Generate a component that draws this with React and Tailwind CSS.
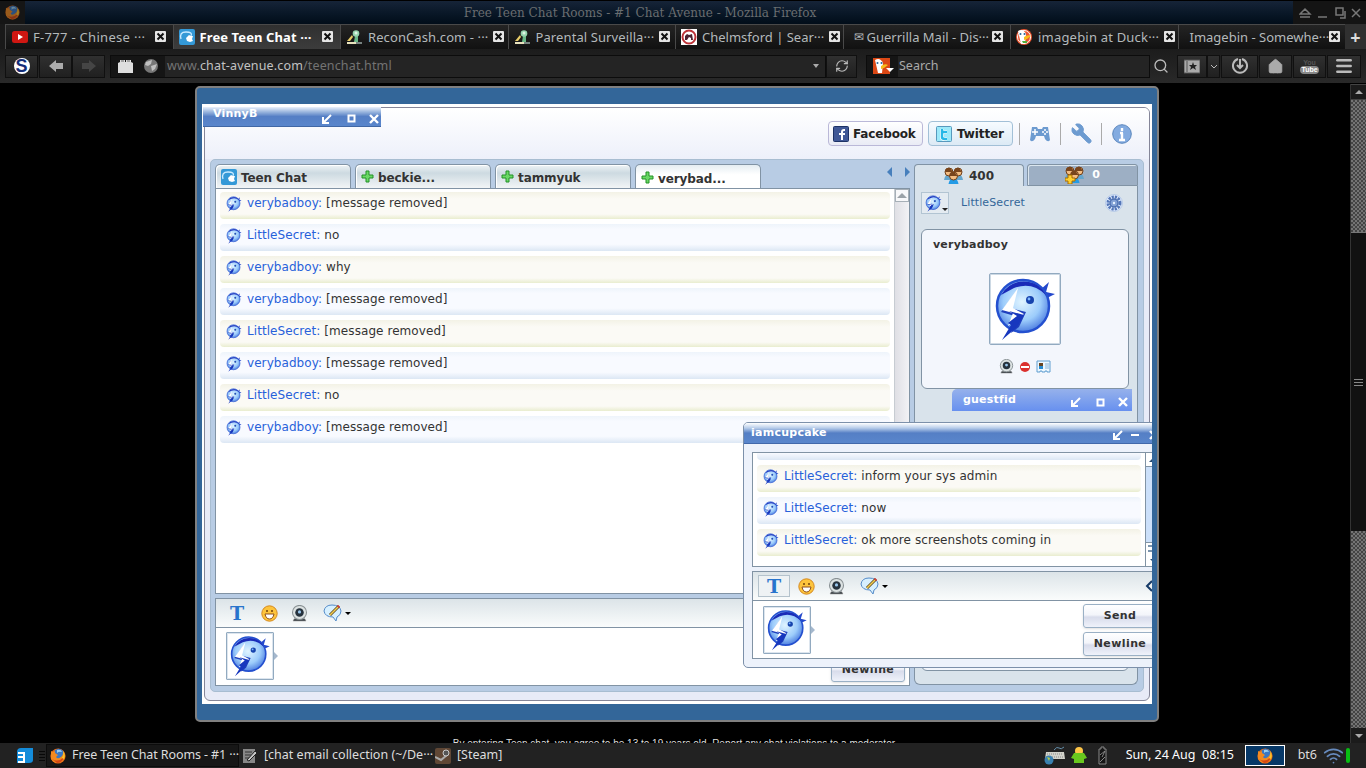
import React from "react";
import { Wrench, Gamepad2, RefreshCw, Search, Menu, Home, Wifi } from "lucide-react";

function Bird({ size, className = "" }) {
  return (
    <svg width={size} height={size} viewBox="0 0 64 64" className={"shrink-0 " + className}>
      <defs>
        <radialGradient id="birdFill" cx="0.48" cy="0.42" r="0.6">
          <stop offset="0" stopColor="#e0f4ff" />
          <stop offset="0.6" stopColor="#9cccfb" />
          <stop offset="1" stopColor="#4778de" />
        </radialGradient>
      </defs>
      <path d="M47 13 56 5 53 15 62 17 50 23Z" fill="#2448cc" />
      <circle cx="30" cy="29" r="26" fill="url(#birdFill)" stroke="#2450cf" strokeWidth="2.5" />
      <path d="M8 18Q18 2 36 5 47 7 53 18 39 4 21 11Z" fill="#1a2bb8" />
      <path d="M18 56 25 40 8 35 23 15 17 31 33 35 26 50Z" fill="#2040bd" />
      <path d="M25 11 9 33 20 36 15 49 31 37 20 31Z" fill="white" />
      <path d="M9 63 18 48 15 46 24 39 16 34 31 38 24 50Z" fill="#1737be" />
      <circle cx="37" cy="23" r="4" fill="#1643ad" />
      <circle cx="36" cy="22" r="1.4" fill="#7fb8ff" />
    </svg>
  );
}

function Firefox({ size = 16, className = "" }) {
  return (
    <svg width={size} height={size} viewBox="0 0 16 16" className={"shrink-0 " + className}>
      <circle cx="8" cy="8" r="7.6" fill="#e66a13" />
      <circle cx="8.7" cy="6" r="5.3" fill="#3b78c3" />
      <path d="M7 2q4-1 5 2-3-1-5 1Z" fill="#9bd1f2" />
      <path d="M1 3 3 4 5 3 5 5 8 7 6 9Q8 12 12 8L14 4Q16 11 11 14 5 17 1 11Z" fill="#f38a20" />
      <path d="M2 11Q8 15 14 9 12 15 7 15Z" fill="#d54714" />
      <path d="M13 3Q16 7 14 11L12 10Q14 7 13 3Z" fill="#fbc42b" />
    </svg>
  );
}

function Plus() {
  return (
    <svg width="13" height="13" viewBox="0 0 13 13" className="shrink-0">
      <path d="M5 1h3v4h4v3H8v4H5V8H1V5h4Z" fill="#69d865" stroke="#239126" />
    </svg>
  );
}

function Room({ size = 16 }) {
  return (
    <svg width={size} height={size} viewBox="0 0 16 16" className="shrink-0">
      <rect width="16" height="16" rx="2" fill="#3499d7" />
      <path d="M2 10Q0 3 7 3T12 7" fill="none" stroke="#c9eaff" strokeWidth="1.3" />
      <path d="M10 6 12 7 14 7 13 10 14 12 11 13 8 12 7 9Z" fill="white" />
    </svg>
  );
}

function Recon() {
  return (
    <svg width="17" height="15" viewBox="0 0 17 15" className="shrink-0">
      <path d="M9 6h3v6H8Z" fill="#68b887" />
      <circle cx="10" cy="3.5" r="3.3" fill="#94d3ac" />
      <circle cx="10" cy="3" r="1.5" fill="#e1f6e6" />
      <path d="M1 11 6 5 7 7 4 11Z" fill="#e8cd68" />
      <path d="M1 12h9v2H1Z" fill="#e8e2bd" />
      <path d="M10 12h6v2h-6Z" fill="#788381" />
    </svg>
  );
}

function Duck({ square }) {
  return (
    <svg width="17" height="16" viewBox="0 0 17 16" className="shrink-0">
      {square ? <rect width="17" height="16" fill="#dc4815" /> : <circle cx="8" cy="8" r="8" fill="#ed5530" />}
      {!square && <circle cx="8" cy="8" r="6.5" fill="none" stroke="white" />}
      <path d="M2 2Q7-1 10 5L9 15H5Z" fill="white" />
      <path d="M8 8Q12 5 15 7L11 10 8 11Z" fill="#f6bd19" />
      <circle cx="4.5" cy="5" r="1" fill="#22659b" />
      <circle cx="8.5" cy="5" r="1" fill="#22659b" />
      {!square && <path d="M6 12h5v2H7Z" fill="#52ae3b" />}
    </svg>
  );
}

function TabIcon({ kind }) {
  if (kind === "yt")
    return (
      <svg width="16" height="12" viewBox="0 0 16 12" className="shrink-0">
        <rect width="16" height="12" rx="2.5" fill="#cf1712" />
        <path d="M6 3v6l5-3Z" fill="white" />
      </svg>
    );
  if (kind === "room") return <Room />;
  if (kind === "recon") return <Recon />;
  if (kind === "duck") return <Duck />;
  if (kind === "mail") return <span className="text-[12px] leading-4">✉</span>;
  if (kind === "council")
    return (
      <svg width="16" height="16" viewBox="0 0 16 16" className="shrink-0">
        <rect width="16" height="16" fill="white" />
        <circle cx="8" cy="8" r="6.5" fill="white" stroke="#bd3338" strokeWidth="2" />
        <path d="M4 11V7L6 5 8 6 11 5 12 11H10V9L8 8 6 11Z" fill="#4d2230" />
      </svg>
    );
  return null;
}

const tabs = [
  ["yt", "F-777 - Chinese ···", "pl-[6px] gap-[5px]", "tracking-[0.3px]"],
  ["room", "Free Teen Chat ···", "pl-[5px] gap-[5px]", "tracking-[0.1px]"],
  ["recon", "ReconCash.com - ···", "pl-[5px] gap-[5px]", "tracking-[0.1px]"],
  ["recon", "Parental Surveilla···", "pl-[5px] gap-[5px]", "tracking-[0.1px]"],
  ["council", "Chelmsford | Sear···", "pl-[5px] gap-[5px]", "tracking-[0px]"],
  ["mail", "Guerrilla Mail - Dis···", "pl-[10px] gap-[3px]", "tracking-[0px]"],
  ["duck", "imagebin at Duck···", "pl-[5px] gap-[5px]", "tracking-[0.2px]"],
  ["none", "Imagebin - Somewhe···", "pl-[11px]", "tracking-[0px]"],
];

function BrowserTabs() {
  return (
    <div className="flex h-[25px] bg-[#191919] pl-[5px] font-['Noto_Sans',sans-serif] text-[13px]">
      {tabs.map(([icon, label, spacing, tracking], i) => (
        <div key={i} className={"flex w-[167.5px] shrink-0 items-center border-l border-t border-[#494949] pr-[7px] " + spacing + (i === 1 ? " bg-gradient-to-b from-[#303030] to-[#3c3c3c] font-bold text-white" : " bg-gradient-to-b from-[#242424] to-[#111] text-[#b4b9bb]")}>
          <TabIcon kind={icon} />
          <span className={"flex-1 whitespace-nowrap leading-4 " + tracking}>{label}</span>
          <svg width="11" height="11" viewBox="0 0 11 11" className="mb-0.5 shrink-0">
            <rect width="11" height="11" rx="1" fill="#e5e5e5" />
            <path d="M2.5 2.5 8.5 8.5M8.5 2.5 2.5 8.5" stroke="#111" strokeWidth="2" />
          </svg>
        </div>
      ))}
      <div className="flex flex-1 items-center justify-center bg-[#303030] text-[18px] font-bold leading-4 text-[#ddd]">+</div>
    </div>
  );
}

function ToolButton({ className = "", children }) {
  return <div className={"flex h-[23px] shrink-0 items-center justify-center border border-[#101010] bg-gradient-to-b from-[#303030] to-[#202020] text-[#bbb] " + className}>{children}</div>;
}

function NavArrow({ back, dim }) {
  return (
    <svg width="16" height="14" viewBox="0 0 16 14" className={back ? "" : "-scale-x-100"}>
      <path d="M1 7 8 1V4h7v6H8v3Z" fill={dim ? "#454545" : "#ababab"} />
    </svg>
  );
}

function NavBar() {
  return (
    <div className="flex h-[35px] items-center border-b border-black bg-gradient-to-b from-[#1c1c1c] to-[#292929] font-['Noto_Sans',sans-serif] text-[12.5px]">
      <ToolButton className="ml-[5px] w-[33px]">
        <span className="flex h-4 w-4 items-center justify-center rounded-full bg-white font-['Liberation_Sans'] text-[18px] font-bold leading-4 text-[#142d78]">S</span>
      </ToolButton>
      <ToolButton className="ml-[1px] w-[33px]"><NavArrow back /></ToolButton>
      <ToolButton className="w-[33px]"><NavArrow dim /></ToolButton>
      <div className="ml-[5px] flex h-[23px] w-[716px] items-center border border-[#0c0c0c] bg-[#242424]">
        <div className="flex h-full w-[54px] items-center gap-[11px] bg-[#151515] pl-[7px]">
          <svg width="15" height="14" viewBox="0 0 15 14">
            <path d="M0 4V14H15V4L13 3V1H8V3H7V1H2V3Z" fill="#dedede" />
            <path d="M3 2h3M9 2h3" stroke="#666" />
          </svg>
          <svg width="14" height="14" viewBox="0 0 14 14">
            <circle cx="7" cy="7" r="7" fill="#777" />
            <path d="M2 3 8 1 7 5 4 7 1 6ZM7 7 13 5 11 10 8 12Z" fill="#c0c0c0" />
          </svg>
        </div>
        <span className="ml-[2px] flex-1 tracking-[0.15px] text-[#737373]">www.<span className="text-[#c2c2c2]">chat-avenue.com</span>/teenchat.html</span>
        <span className="mr-[6px] h-0 w-0 border-x-[3px] border-t-[4px] border-x-transparent border-t-[#aaa]" />
      </div>
      <ToolButton className="w-[31px]"><RefreshCw size={14} strokeWidth={2} /></ToolButton>
      <div className="ml-[9px] flex h-[23px] w-[284px] items-center border border-[#0c0c0c] bg-[#242424]">
        <div className="flex h-full w-[31px] items-center bg-[#151515] pl-[6px]"><Duck square /><span className="-ml-[4px] mt-2 h-0 w-0 shrink-0 border-x-4 border-t-4 border-x-transparent border-t-white" /></div>
        <span className="ml-[1px] text-[#aaa]">Search</span>
      </div>
      <Search size={16} className="ml-[3px] text-[#bbb]" />
      <ToolButton className="ml-[8px] w-[30px]">
        <svg width="16" height="15" viewBox="0 0 16 15">
          <path d="M0 1h16v13H0ZM3 2v11" fill="#aaa" stroke="#555" />
          <path d="M9 3 10 6h3l-2 2 1 3-3-2-3 2 1-3-2-2h3Z" fill="#222" />
        </svg>
      </ToolButton>
      <ToolButton className="w-[13px]">
        <svg width="8" height="5" viewBox="0 0 8 5"><path d="M1 1 4 4 7 1" fill="none" stroke="#bbb" /></svg>
      </ToolButton>
      <ToolButton className="ml-[1px] w-[37px]">
        <svg width="16" height="16" viewBox="0 0 16 16" fill="none" stroke="#bbb" strokeWidth="2"><path d="M10 1A7 7 0 1 1 6 1M8 1v8M5 7l3 3 3-3" /></svg>
      </ToolButton>
      <ToolButton className="ml-[1px] w-[33px]"><Home size={17} fill="#aaa" stroke="#aaa" strokeWidth={1} /></ToolButton>
      <ToolButton className="ml-[1px] w-[33px] flex-col font-['Liberation_Sans_Narrow','Liberation_Sans'] text-[7px] font-bold">
        <span className="h-[7px] leading-[7px] text-[#555]">You</span>
        <span className="h-[8px] rounded-sm bg-[#888] px-px leading-[8px] text-white">Tube</span>
      </ToolButton>
      <ToolButton className="ml-[1px] w-[34px]"><Menu size={20} strokeWidth={3} /></ToolButton>
    </div>
  );
}

function ChatRow({ name, text, alt }) {
  return (
    <div className={"mb-[5px] flex h-[27px] shrink-0 items-start rounded-[4px] pl-[6px] pt-[4px] " + (alt ? "bg-[linear-gradient(#eef4fb,#f8faff_20%,#f8faff_75%,#dce7f4)]" : "bg-[linear-gradient(#f3f2e6,#fbfaf5_25%,#fbfaf5_82%,#e9edcf)]")}>
      <Bird size={16} />
      <span className="ml-[5px] whitespace-nowrap text-[12px] leading-[15px] tracking-[0.07px] text-[#333]"><span className="text-[#2861da]">{name}:</span> {text}</span>
    </div>
  );
}

const messages = [
  ["verybadboy", "[message removed]"],
  ["LittleSecret", "no"],
  ["verybadboy", "why"],
  ["verybadboy", "[message removed]"],
  ["LittleSecret", "[message removed]"],
  ["verybadboy", "[message removed]"],
  ["LittleSecret", "no"],
  ["verybadboy", "[message removed]"],
];

function Webcam({ size = 16 }) {
  return (
    <svg width={size} height={size} viewBox="0 0 16 16">
      <path d="M3 13h10l1 2H2Z" fill="#3b4248" stroke="#888" strokeWidth=".5" />
      <circle cx="8" cy="7" r="6.6" fill="#dce2e2" stroke="#899194" />
      <circle cx="8" cy="7" r="4" fill="#26323d" />
      <circle cx="8" cy="6.5" r="1.5" fill="#9ac7ed" />
    </svg>
  );
}

function ChatTools({ raised }) {
  return (
    <div className="flex h-[29px] shrink-0 items-center border-b border-[#8193a4] bg-gradient-to-b from-[#dce4e8] to-[#fafcfc] pl-[5px]">
      <div className={"flex h-[22px] w-8 items-center justify-center font-['DejaVu_Serif'] text-[19px] font-bold text-[#2874cc] " + (raised ? "border border-[#b4c2cc] bg-[#eef2f4]" : "")}>T</div>
      <svg width="17" height="17" viewBox="0 0 17 17" className="ml-[8px]">
        <circle cx="8.5" cy="8.5" r="7.7" fill="#fdc43c" stroke="#d58920" />
        <path d="M4 9h9Q12 14 8.5 14T4 9Z" fill="white" stroke="#8e501b" />
        <path d="M6 5v2M11 5v2" stroke="#70410c" strokeWidth="1.5" />
      </svg>
      <div className="ml-[13px]"><Webcam size={17} /></div>
      <svg width="20" height="18" viewBox="0 0 20 18" className="ml-[15px]">
        <path d="M10 13Q2 13 1 7 2 1 9 1 17 1 18 7 18 11 14 13L13 17Z" fill="#d7f0ff" stroke="#548bc9" />
        <path d="M7 11 16 2" stroke="#58451e" strokeWidth="3" />
        <path d="M7 11 15 3" stroke="#f3cd50" strokeWidth="1.6" />
        <path d="m15 3 1-1" stroke="#df383c" strokeWidth="3" />
      </svg>
      <span className="ml-[2px] h-0 w-0 border-x-[3px] border-t-[3px] border-x-transparent border-t-black" />
      {raised && <svg width="8" height="12" viewBox="0 0 8 12" className="ml-auto mr-[-1px]"><path d="M7 1 2 6 7 11" fill="none" stroke="#173b68" strokeWidth="2" /></svg>}
    </div>
  );
}

function Avatar() {
  return (
    <div className="flex items-center">
      <div className="flex h-12 w-12 items-center justify-center rounded-[1px] border border-[#92aac0] bg-white shadow-[inset_0_0_0_1px_#dce5ee]"><Bird size={42} /></div>
      <span className="h-0 w-0 border-y-[4px] border-l-[4px] border-y-transparent border-l-[#a5b8cd]" />
    </div>
  );
}

function PushButton({ children }) {
  return <div className="flex h-6 w-[74px] items-center justify-center rounded-[3px] border border-[#9ab0c5] bg-[linear-gradient(#fff,#f3f5fa_45%,#d8dceb_55%,#eff2fa)] text-[11px] font-bold tracking-[0.4px] text-[#333] shadow-sm">{children}</div>;
}

function WindowButtons({ minus, className = "" }) {
  return (
    <div className={"flex items-center " + className}>
      <svg width="10" height="10" viewBox="0 0 10 10"><path d="M9 1 2 8M1 3v6h6" fill="none" stroke="white" strokeWidth="2" /></svg>
      {minus ? (
        <svg width="10" height="10" viewBox="0 0 10 10" className="ml-[7px]"><path d="M1 5h8" stroke="white" strokeWidth="2" /></svg>
      ) : (
        <svg width="9" height="9" viewBox="0 0 9 9" className="ml-[15px]"><path d="M1.5 1.5h6v6h-6Z" fill="none" stroke="white" strokeWidth="2" /></svg>
      )}
      <svg width="10" height="10" viewBox="0 0 10 10" className={minus ? "ml-[9px]" : "ml-[13px]"}><path d="M1 1 9 9M9 1 1 9" stroke="white" strokeWidth="2.4" /></svg>
    </div>
  );
}

function ChatTab({ active, icon, children }) {
  return (
    <div className={"mr-1 flex shrink-0 items-center rounded-t-[5px] border border-b-0 border-[#8193a4] pl-[5px] text-[12px] font-bold text-[#333] " + (active ? "h-[25px] w-[126px] bg-gradient-to-b from-[#e5edf2] to-white to-40%" : "h-[24px] w-[136px] bg-[linear-gradient(#eef3f6,#cddae1_35%,#f2f5f6)] shadow-[inset_1px_1px_#fff]")}>
      {icon}
      <span className="ml-1 pt-[3px] leading-4 tracking-[-0.1px]">{children}</span>
    </div>
  );
}

function People({ added }) {
  return (
    <svg width="19" height="18" viewBox="0 0 19 18">
      {[[5, 5], [14, 5], [9.5, 9]].map(([x, y], i) => (
        <g key={i}>
          <path d={`M${x - 5} ${y + 8}Q${x - 4} ${y + 2} ${x} ${y + 2}T${x + 5} ${y + 8}Z`} fill={i === 2 ? "#249be6" : "#64a6ce"} />
          <circle cx={x} cy={y} r="4" fill="#f4bd82" stroke="#70401b" />
          <path d={`M${x - 4} ${y}Q${x - 3} ${y - 5} ${x + 1} ${y - 4}L${x + 4} ${y}Z`} fill="#79451c" />
        </g>
      ))}
      {added && <path d="M3 9h4v3h3v3H7v3H3v-3H0v-3h3Z" fill="#ffd02e" stroke="#a96d00" />}
    </svg>
  );
}

function LeftColumn() {
  return (
    <div className="flex w-[695px] flex-col">
      <div className="flex h-6 shrink-0 items-start">
        <ChatTab icon={<Room />}>Teen Chat</ChatTab>
        <ChatTab icon={<Plus />}>beckie...</ChatTab>
        <ChatTab icon={<Plus />}>tammyuk</ChatTab>
        <ChatTab active icon={<Plus />}>verybad...</ChatTab>
        <div className="ml-auto flex gap-[13px] pt-[3px]">
          <span className="h-0 w-0 border-y-[5px] border-r-[5px] border-y-transparent border-r-[#477fbc]" />
          <span className="h-0 w-0 border-y-[5px] border-l-[5px] border-y-transparent border-l-[#477fbc]" />
        </div>
      </div>
      <div className="flex h-[406px] shrink-0 border border-[#8193a4] bg-white">
        <div className="flex w-[678px] flex-col px-1 pt-[3px]">
          {messages.map(([name, text], i) => <ChatRow key={i} name={name} text={text} alt={i % 2 === 1} />)}
        </div>
        <div className="w-[15px] border-l border-[#c7ccd2] bg-gradient-to-r from-[#dfdfe5] to-[#f2f2f5]">
          <div className="flex h-[13px] items-center justify-center border border-[#a6afb7] bg-[#f8f8fa]"><span className="h-0 w-0 border-x-[5px] border-b-[5px] border-x-transparent border-b-[#9ba2a8]" /></div>
        </div>
      </div>
      <div className="mt-1 flex h-[88px] shrink-0 flex-col border border-[#8193a4] bg-white">
        <ChatTools />
        <div className="flex flex-1 items-start justify-between pl-[10px] pr-1 pt-[4px]">
          <Avatar />
          <div className="mt-[26px]"><PushButton>Newline</PushButton></div>
        </div>
      </div>
    </div>
  );
}

function RightColumn() {
  return (
    <div className="ml-1 flex h-[521px] w-[224px] flex-col">
      <div className="flex h-[22px] shrink-0 items-start text-[12px] font-bold">
        <div className="flex h-[22px] w-[110px] items-center justify-center gap-[6px] rounded-t-[4px] border border-b-0 border-[#8193a4] bg-[#d9e3eb] text-[#333]"><People /> 400</div>
        <div className="ml-[3px] flex h-[22px] w-[111px] items-center justify-center gap-[8px] rounded-t-[3px] border border-[#8193a4] bg-[#9dafc4] text-[11px] text-white shadow-[inset_1px_1px_#dbe6ef]"><People added /> 0</div>
      </div>
      <div className="flex flex-1 flex-col rounded-b-[6px] border border-t-0 border-[#8193a4] bg-[#d9e3eb] px-[6px] pt-[6px]">
        <div className="flex h-[22px] shrink-0 items-center">
          <div className="flex h-[22px] w-7 items-center border border-[#b2c4d2] bg-[#e4ebf1] pl-[3px]"><Bird size={17} /><span className="mt-3 h-0 w-0 border-x-[3px] border-t-[3px] border-x-transparent border-t-[#222]" /></div>
          <span className="ml-[12px] text-[11px] tracking-[0.1px] text-[#336699]">LittleSecret</span>
          <svg width="18" height="18" viewBox="0 0 18 18" className="ml-auto mr-2">
            <circle cx="9" cy="9" r="8.5" fill="#e5efff" stroke="#a7bee3" strokeWidth=".7" />
            <circle cx="9" cy="9" r="6" fill="none" stroke="#5477b8" strokeWidth="3" strokeDasharray="2.2 .95" />
            <circle cx="9" cy="9" r="4" fill="#83a1d5" stroke="#4d70b0" strokeWidth="1.4" />
            <circle cx="9" cy="9" r="1.2" fill="#e9f3ff" />
          </svg>
        </div>
        <div className="mt-[15px] flex h-[160px] w-[208px] shrink-0 flex-col items-center rounded-[6px] border border-[#8193a4] bg-[#f3f6fc]">
          <span className="ml-[11px] mt-[8px] self-start text-[11px] font-bold leading-[14px] tracking-[0.2px] text-[#333]">verybadboy</span>
          <div className="mt-[21px] flex h-[72px] w-[72px] items-center justify-center rounded-[2px] border border-[#92aac0] bg-white shadow-[inset_0_0_0_1px_#cdd9e4]"><Bird size={64} /></div>
          <div className="mt-[14px] flex items-center gap-[5px]">
            <Webcam size={15} />
            <svg width="12" height="12" viewBox="0 0 12 12"><circle cx="6" cy="6" r="5" fill="#db302e" /><path d="M2 6h8" stroke="white" strokeWidth="2" /></svg>
            <svg width="15" height="13" viewBox="0 0 15 13"><path d="M1 1h13v11h-3v-1H9v1H6v-1H4v1H1Z" fill="#edf8ff" stroke="#609ed0" /><path d="M3 3h4v3H3Z" fill="#684522" /><path d="M3 6h4v3H3Z" fill="#278bd0" /><path d="M9 4h4M9 6h4M9 8h4" stroke="#8ab5d9" /></svg>
          </div>
        </div>
        <div className="mb-[13px] mt-auto h-5 w-[208px] rounded-b-[6px] border border-[#8193a4] bg-[#f3f6fc]" />
      </div>
    </div>
  );
}

function Header() {
  return (
    <div className="flex h-[51px] shrink-0 items-center justify-end gap-[5px] rounded-t-[5px] bg-gradient-to-b from-white to-[#edf0fa] pr-[17px] text-[12px] font-bold text-[#222]">
      <div className="flex h-[25px] w-[95px] items-center gap-[4px] rounded-[4px] border border-[#bab8d8] bg-gradient-to-b from-white to-[#e9ebf5] pl-[4px]">
        <svg width="16" height="16" viewBox="0 0 16 16"><rect x=".5" y=".5" width="15" height="15" rx="1" fill="#405896" stroke="#1d3266" /><path d="M12 4h-1q-2 0-2 2v8M6 8h6" stroke="white" strokeWidth="2" fill="none" /></svg>
        <span className="tracking-[-0.15px]">Facebook</span>
      </div>
      <div className="flex h-[25px] w-[85px] items-center gap-[5px] rounded-[4px] border border-[#a2c0d7] bg-gradient-to-b from-[#f6fbff] to-[#dceaf5] pl-[7px]">
        <svg width="16" height="16" viewBox="0 0 16 16"><rect x=".5" y=".5" width="15" height="15" rx="1" fill="#9ce9fa" stroke="#5799bd" /><path d="M6 3v8q0 2 3 2h2M6 6h5" stroke="white" strokeWidth="4" fill="none" /><path d="M6 3v8q0 2 3 2h2M6 6h5" stroke="#25b8e7" strokeWidth="2.5" fill="none" /></svg>
        <span className="tracking-[-0.1px]">Twitter</span>
      </div>
      <div className="flex items-center text-[#6d9bd0]">
        <span className="ml-[1px] mr-[9px] h-[22px] w-px bg-[#aaa]" />
        <svg width="22" height="18" viewBox="0 0 22 18"><path d="M3 2h5l1 2h4l1-2h5l2 13q-2 3-5-1l-1-3H7l-1 3q-3 4-5 1Z" fill="#6d9bd0" /><path d="M3 7h6M6 4v6" stroke="white" strokeWidth="1.5" /><path d="M16 4v2M16 8v2M13 7h2M17 7h2" stroke="white" strokeWidth="1.5" /></svg>
        <span className="ml-[9px] mr-[9px] h-[22px] w-px bg-[#aaa]" />
        <Wrench size={23} fill="currentColor" strokeWidth={1} className="-scale-x-100" />
        <span className="ml-[8px] mr-[10px] h-[22px] w-px bg-[#aaa]" />
        <svg width="20" height="20" viewBox="0 0 20 20"><circle cx="10" cy="10" r="9.3" fill="#83abe0" stroke="#5a86bd" /><path d="M10 4v3M10 9v7M8 9h3M7 16h6" stroke="white" strokeWidth="2.4" /></svg>
      </div>
    </div>
  );
}

function PrivateWindow() {
  return (
    <div className="absolute left-[541px] top-[318px] flex h-[246px] w-[430px] flex-col rounded-[5px] border border-[#7c90aa] bg-[#edf2fb]">
      <div className="flex h-[21px] w-full shrink-0 items-center rounded-t-[4px] border-b border-[#4168aa] bg-[linear-gradient(#fff,#b8cdea_25%,#557fc5_50%,#5986cc)] pl-[7px] text-[11px] font-bold text-white">
        <span className="tracking-[0.25px]">iamcupcake</span><WindowButtons minus className="ml-[286px] mt-[3px]" />
      </div>
      <div className="ml-[8px] mt-[8px] flex h-[115px] w-[410px] shrink-0 border border-[#8193a4] bg-white">
        <div className="flex w-[393px] flex-col px-1">
          <div className="mb-[5px] h-[7px] shrink-0 rounded-b-[4px] bg-gradient-to-b from-[#f8faff] to-[#dce7f4]" />
          <ChatRow name="LittleSecret" text="inform your sys admin" />
          <ChatRow name="LittleSecret" text="now" alt />
          <ChatRow name="LittleSecret" text="ok more screenshots coming in" />
        </div>
        <div className="flex w-4 flex-col justify-between border-l border-[#8193a4] bg-[#cce0fa]">
          <div className="h-[14px] border-b border-[#8193a4] bg-white pl-[3px] pt-[5px]"><span className="block h-0 w-0 border-x-4 border-b-4 border-x-transparent border-b-[#244970]" /></div>
          <div className="h-[24px] border-t border-[#8193a4] bg-white pl-[2px] pt-[2px]"><div className="h-[7px] w-[10px] border-y-2 border-[#7b94ad]" /><span className="ml-[2px] mt-[7px] block h-0 w-0 border-x-4 border-t-4 border-x-transparent border-t-[#244970]" /></div>
        </div>
      </div>
      <div className="ml-[8px] mt-1 flex h-[88px] w-[410px] shrink-0 flex-col border border-[#8193a4] bg-white">
        <div className="w-[399px]"><ChatTools raised /></div>
        <div className="flex items-start pl-[10px] pt-[3px]">
          <div className="mt-[2px]"><Avatar /></div>
          <div className="ml-[268px] flex flex-col gap-1"><PushButton>Send</PushButton><PushButton>Newline</PushButton></div>
        </div>
      </div>
    </div>
  );
}

function ChatApp() {
  return (
    <div className="ml-[195px] mt-[2px] h-[636px] w-[964px] shrink-0 rounded-[5px] border-2 border-[#808080] bg-[#336699] px-[5px] py-4 font-['DejaVu_Sans',sans-serif]">
      <div className="relative h-[600px] w-[950px] overflow-hidden bg-white pl-[2px] pt-[3px]">
        <div className="flex h-[594px] w-[946px] flex-col rounded-[6px] border border-[#858699] bg-[#e8ebf7]">
          <Header />
          <div className="ml-[5px] flex h-[533px] w-[934px] rounded-[5px] border border-[#a8bdd1] bg-[#b8cce4] pl-[4px] pt-[4px]">
            <LeftColumn />
            <RightColumn />
          </div>
        </div>
        <div className="absolute left-[1px] top-[3px] flex h-[20px] w-[178px] items-center border-b border-[#4067a5] bg-[linear-gradient(#eaf1fc,#9db8df_25%,#557fc5_50%,#5986cc)] pl-[10px] text-[11px] font-bold text-white">
          <span className="-mt-1 w-[109px] tracking-[0.2px]">VinnyB</span><WindowButtons className="mt-1" />
        </div>
        <div className="absolute left-[750px] top-[285px] flex h-[22px] w-[180px] items-center rounded-tl-[5px] bg-gradient-to-b from-[#96b1eb] to-[#6790ef] pl-[11px] text-[11px] font-bold text-white">
          <span className="w-[108px] tracking-[0.2px]">guestfid</span><WindowButtons className="mt-1" />
        </div>
        <PrivateWindow />
      </div>
    </div>
  );
}

function PageScrollbar() {
  return (
    <div className="flex w-4 flex-col border-l border-[#333] bg-[#111]">
      <div className="flex h-[16px] items-center justify-center border-y border-[#444] bg-[#1b1b1b]"><span className="h-0 w-0 border-x-4 border-b-4 border-x-transparent border-b-[#aaa]" /></div>
      <div className="h-[132px] bg-[repeating-conic-gradient(#444_0_25%,#747474_0_50%)] bg-[length:4px_4px]" />
      <div className="flex h-[299px] flex-col items-center justify-center gap-[2px] border-t border-[#777] bg-[#111]">
        <span className="h-px w-[9px] bg-[#888]" /><span className="h-px w-[9px] bg-[#888]" /><span className="h-px w-[9px] bg-[#888]" />
      </div>
      <div className="flex-1 bg-[repeating-conic-gradient(#444_0_25%,#747474_0_50%)] bg-[length:4px_4px]" />
      <div className="flex h-[15px] items-center justify-center bg-[#1b1b1b]"><span className="h-0 w-0 border-x-4 border-t-4 border-x-transparent border-t-[#aaa]" /></div>
    </div>
  );
}

function Taskbar() {
  return (
    <div className="flex h-[25px] items-center bg-[#222] font-['Noto_Sans',sans-serif] text-[12.5px] text-[#ddd]">
      <svg width="16" height="15" viewBox="0 0 16 15" className="ml-[17px]"><path d="M4 0h12v12q0 3-4 3H0V4q0-4 4-4Z" fill="#148cda" /><path d="M1 5h6v9H1M1 9h6" stroke="white" strokeWidth="2" fill="none" /></svg>
      <div className="ml-[6px] flex h-[10px] w-[6px] flex-col justify-between">{[0, 1, 2, 3].map((i) => <span key={i} className="h-px bg-[#080808]" />)}</div>
      <div className="ml-[1px] flex h-[23px] w-[193px] items-center gap-[6px] border border-[#0c0c0c] bg-[#171717] pl-[3px]"><Firefox /><span className="whitespace-nowrap tracking-[-0.1px]">Free Teen Chat Rooms - #1 ···</span></div>
      <svg width="16" height="16" viewBox="0 0 16 16" className="ml-[3px]"><path d="M1 1h12v14H1Z" fill="#888" /><path d="M3 4h7M3 7h6M3 10h5" stroke="#333" /><path d="m5 12 8-9 2 2-8 8Z" fill="#c7c7c7" stroke="#222" /></svg>
      <span className="ml-[6px] w-[171px] whitespace-nowrap">[chat email collection (~/De···</span>
      <svg width="16" height="16" viewBox="0 0 16 16"><rect width="16" height="16" rx="2" fill="#604735" /><path d="m0 9 6 3 6-5" stroke="#aaa" strokeWidth="2" fill="none" /><circle cx="11" cy="5" r="3" fill="#555" stroke="#ccc" /></svg>
      <span className="ml-[6px]">[Steam]</span>
      <div className="ml-auto flex items-center">
        <svg width="22" height="19" viewBox="0 0 22 19"><path d="M10 4Q13 0 15 2T20 1" fill="none" stroke="#648eaa" /><path d="M2 6h18l1 7H1Z" fill="#d2d2ca" /><path d="M3 8h16M2 11h18" stroke="#888" strokeDasharray="1 1" /><circle cx="5" cy="14" r="4.5" fill="#3a80b0" /><path d="m3 11 3 1-1 3Z" fill="#b5ce45" /></svg>
        <svg width="16" height="17" viewBox="0 0 16 17" className="ml-[5px]"><circle cx="8" cy="4" r="4" fill="#ffc647" /><path d="M3 6h10l3 5-3 1v4H3v-4l-3-1Z" fill="#69c71e" /></svg>
        <svg width="11" height="19" viewBox="0 0 11 19" className="ml-[10px]"><path d="M2 3h2V1h3v2h2v15H2Z" fill="#171717" stroke="#888" /><path d="m3 9 5-4-3 6M3 16l5-5" stroke="#888" /></svg>
        <span className="ml-[18px] w-[107px] whitespace-nowrap text-white">Sun, 24 Aug&nbsp; 08:15</span>
        <div className="ml-[12px] flex h-[21px] w-10 items-center justify-center border border-white bg-[#073867]"><Firefox /></div>
        <span className="ml-[13px]">bt6</span>
        <Wifi size={21} className="ml-[6px] text-[#668abd]" />
        <span className="ml-[2px] mr-[16px] h-[15px] w-[4px] rounded-sm bg-[#08bd13]" />
      </div>
    </div>
  );
}

export default function App() {
  return (
    <div className="flex h-[768px] w-[1366px] flex-col overflow-hidden bg-black">
      <div className="flex h-[24px] shrink-0 items-center border-t border-black bg-gradient-to-b from-[#162438] to-[#020d19]">
        <div className="flex h-full w-[25px] items-center justify-center bg-[#151515]"><Firefox size={15} className="opacity-60" /></div>
        <span className="flex-1 pl-[2px] pr-[40px] text-center font-['DejaVu_Serif',serif] text-[12px] text-[#696d70]">Free Teen Chat Rooms - #1 Chat Avenue - Mozilla Firefox</span>
        <div className="flex h-full w-[73px] items-center justify-center bg-[#141414]">
          <svg width="62" height="12" viewBox="0 0 62 12" fill="none" stroke="#777" strokeWidth="1.5"><path d="M1 7 6 2 11 7ZM1 10h10M19 10h9M37 1h7v7h-7ZM46 4v7h-5M53 2l8 8M61 2l-8 8" /></svg>
        </div>
      </div>
      <BrowserTabs />
      <NavBar />
      <div className="flex h-[659px] shrink-0 overflow-hidden">
        <div className="flex w-[1350px] flex-col">
          <ChatApp />
          <span className="mt-[15px] whitespace-nowrap text-center font-['Liberation_Sans',sans-serif] text-[10px] leading-[14px] text-[#ddd]">By entering Teen chat, you agree to be 13 to 19 years old. Report any chat violations to a moderator.</span>
        </div>
        <PageScrollbar />
      </div>
      <Taskbar />
    </div>
  );
}
